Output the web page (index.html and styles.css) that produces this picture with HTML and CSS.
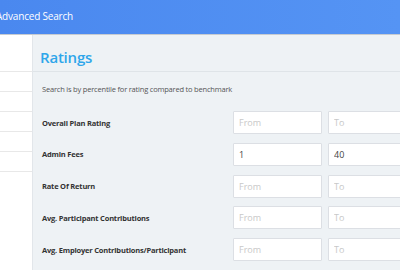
FILE: index.html
```html
<!DOCTYPE html>
<html>
<head lang="en">
    <meta charset="UTF-8">
    <title>Advanced Search</title>
    <link rel="stylesheet" href="styles.css">
</head>
<body>
    <div id="header">
        <span class="title">Advanced Search</span>
    </div>
    <div id="layout">
        <ul id="side">
            <li class="first"></li>
            <li></li>
            <li></li>
            <li></li>
            <li></li>
            <li></li>
            <li class="active">›</li>
        </ul>
        <div id="main">
            <div class="head">
                <h2>Ratings</h2>
            </div>
            <p class="note">Search is by percentile for rating compared to benchmark</p>
            <div class="rows">
                <div class="row">
                    <label>Overall Plan Rating</label>
                    <input type="text" placeholder="From">
                    <input type="text" placeholder="To">
                </div>
                <div class="row">
                    <label>Admin Fees</label>
                    <input type="text" placeholder="From" value="1">
                    <input type="text" placeholder="To" value="40">
                </div>
                <div class="row">
                    <label>Rate Of Return</label>
                    <input type="text" placeholder="From">
                    <input type="text" placeholder="To">
                </div>
                <div class="row">
                    <label>Avg. Participant Contributions</label>
                    <input type="text" placeholder="From">
                    <input type="text" placeholder="To">
                </div>
                <div class="row">
                    <label>Avg. Employer Contributions/Participant</label>
                    <input type="text" placeholder="From">
                    <input type="text" placeholder="To">
                </div>
            </div>
        </div>
    </div>
</body>
</html>
```

FILE: styles.css
```css
*{
    margin: 0;
    padding: 0;
    box-sizing: border-box;
}
body{
    width: 400px;
    height: 270px;
    overflow: hidden;
    font-family: "Open Sans", "Noto Sans", sans-serif;
    background: #eef2f5;
}
#header{
    height: 35px;
    background: linear-gradient(90deg, #4a88ef, #5594f4);
    border-bottom: 1px solid #c6cbd1;
    display: flex;
    align-items: center;
}
#header .title{
    color: #fff;
    font-size: 10px;
    letter-spacing: -0.2px;
    margin-left: -4px;
    margin-top: -2px;
}
#layout{
    display: flex;
    height: 235px;
}
#side{
    width: 33px;
    flex-shrink: 0;
    background: #fff;
    border-right: 1px solid #e2e6ea;
    list-style: none;
}
#side li{
    height: 20px;
    border-bottom: 1px solid #e8e8e8;
}
#side li.first{
    height: 37px;
}
#side li.active{
    border-bottom: none;
    color: #4a90e2;
    font-size: 9px;
    line-height: 22px;
    margin-left: -3px;
}
#main{
    flex: 1;
    overflow: hidden;
}
#main .head{
    height: 37px;
    border-bottom: 1px solid #dfe4e8;
    padding-left: 7px;
    display: flex;
    align-items: center;
}
#main h2{
    color: #2ea6ea;
    font-size: 15px;
    font-weight: 600;
    letter-spacing: -0.2px;
    margin-top: 7px;
}
.note{
    font-size: 7.5px;
    letter-spacing: -0.2px;
    color: #555;
    padding: 12px 0 0 9px;
}
.rows{
    padding: 17px 0 0 9px;
}
.row{
    display: flex;
    align-items: center;
    gap: 6px;
    margin-bottom: 8.75px;
    width: 400px;
}
.row label{
    width: 185px;
    flex-shrink: 0;
    font-size: 7.5px;
    letter-spacing: -0.2px;
    font-weight: 700;
    color: #333;
}
.row input{
    width: 89px;
    height: 23px;
    border: 1px solid #dcdfe4;
    border-radius: 1px;
    background: #fff;
    padding: 0 5px;
    font-family: "Open Sans", "Noto Sans", sans-serif;
    font-size: 9px;
    color: #444;
    outline: none;
}
.row input::placeholder{
    color: #c8c8c8;
}
```
